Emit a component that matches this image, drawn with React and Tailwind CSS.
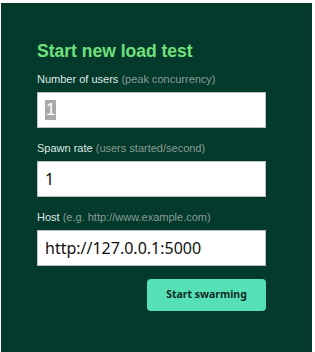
export default function App() {
  const fields = [
    { label: 'Number of users', hint: '(peak concurrency)', value: '1', selected: true },
    { label: 'Spawn rate', hint: '(users started/second)', value: '1' },
    { label: 'Host', hint: '(e.g. http://www.example.com)', value: 'http://127.0.0.1:5000' },
  ]

  return (
    <div className="w-[315px] h-[352px] bg-white pt-[3px] pl-[1px] pr-[3px] overflow-hidden">
      <div className="h-[360px] bg-[#033a2b] pt-[38px] pl-[36px] pr-[46px] font-['Liberation_Sans',Arial,sans-serif]">
        <h2 className="text-[17.5px] leading-[20px] font-bold text-[#71e07c]">Start new load test</h2>
        <div className="mt-[12px] flex flex-col gap-[14px]">
          {fields.map((f) => (
            <div key={f.label}>
              <label className="block text-[11px] leading-[13px] text-[#dfe7e3]">
                {f.label} <span className="text-[#8a9c95]">{f.hint}</span>
              </label>
              <div className="mt-[6px] h-[36px] bg-white border border-[#b9c2be] flex items-center pl-[7px] text-[16px] text-[#111] font-['Noto_Sans',sans-serif]">
                {f.selected ? (
                  <span className="bg-[#a9a9a9] text-white font-['Liberation_Sans',sans-serif] text-[17px] leading-[20px] px-[1px]">{f.value}</span>
                ) : (
                  <span>{f.value}</span>
                )}
              </div>
            </div>
          ))}
        </div>
        <div className="mt-[13px] flex justify-end">
          <button className="w-[119px] h-[32px] rounded-[4px] bg-[#55e0b6] text-[10.5px] font-bold text-[#112a22] font-['Noto_Sans',sans-serif]">
            Start swarming
          </button>
        </div>
      </div>
    </div>
  )
}
